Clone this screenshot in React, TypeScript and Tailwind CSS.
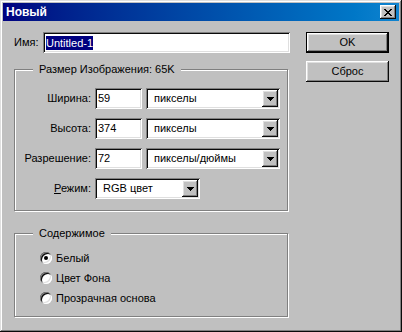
import type { ReactNode } from 'react'

const raised =
  'shadow-[inset_-1px_-1px_#0a0a0a,inset_1px_1px_#ffffff,inset_-2px_-2px_#808080,inset_2px_2px_#dfdfdf]'
const sunken =
  'shadow-[inset_1px_1px_#808080,inset_-1px_-1px_#ffffff,inset_2px_2px_#0a0a0a,inset_-2px_-2px_#dfdfdf]'

function CloseGlyph() {
  return (
    <svg width="8" height="7" viewBox="0 0 8 7" shapeRendering="crispEdges">
      <path
        fill="#000"
        d="M0 0h2v1H0zM6 0h2v1H6zM1 1h2v1H1zM5 1h2v1H5zM2 2h4v1H2zM3 3h2v1H3zM2 4h4v1H2zM1 5h2v1H1zM5 5h2v1H5zM0 6h2v1H0zM6 6h2v1H6z"
      />
    </svg>
  )
}

function ArrowGlyph() {
  return (
    <svg width="7" height="4" viewBox="0 0 7 4" shapeRendering="crispEdges">
      <path fill="#000" d="M0 0h7v1H0zM1 1h5v1H1zM2 2h3v1H2zM3 3h1v1H3z" />
    </svg>
  )
}

function TextBox({ value, width }: { value: string; width: string }) {
  return (
    <div className={`${width} h-[21px] bg-white ${sunken} flex items-center pl-[3px] leading-none`}>
      {value}
    </div>
  )
}

function Select({ value, width }: { value: string; width: string }) {
  return (
    <div className={`${width} h-[21px] bg-white ${sunken} flex items-center p-[2px]`}>
      <span className="flex-1 pl-[6px] leading-none">{value}</span>
      <div className={`w-[16px] h-[17px] bg-[#c0c0c0] ${raised} flex items-center justify-center`}>
        <ArrowGlyph />
      </div>
    </div>
  )
}

function Group({ label, className, children }: { label: string; className: string; children: ReactNode }) {
  return (
    <div
      className={`relative w-[274px] border border-[#808080] shadow-[1px_1px_0_#ffffff,inset_1px_1px_0_#ffffff] ${className}`}
    >
      <span className="absolute -top-[7px] left-[18px] px-[6px] bg-[#c0c0c0] leading-[13px]">{label}</span>
      {children}
    </div>
  )
}

function Row({ label, children }: { label: ReactNode; children: ReactNode }) {
  return (
    <div className="flex items-center h-[21px]">
      <div className="w-[76px] text-right leading-none">{label}</div>
      <div className="flex gap-[4px] ml-[4px]">{children}</div>
    </div>
  )
}

function Radio({ label, checked }: { label: string; checked?: boolean }) {
  return (
    <div className="flex items-center h-[20px] pl-[25px]">
      <div className={`w-[12px] h-[12px] rounded-full bg-white ${sunken} flex items-center justify-center`}>
        {checked && <div className="w-[4px] h-[4px] rounded-full bg-black" />}
      </div>
      <span className="ml-[4px] leading-none">{label}</span>
    </div>
  )
}

export default function App() {
  return (
    <div className="w-[402px] h-[332px] bg-[#c0c0c0] p-[3px] flex flex-col text-[11px] text-black font-['Liberation_Sans',Arial,sans-serif] shadow-[inset_-1px_-1px_#0a0a0a,inset_1px_1px_#dfdfdf,inset_-2px_-2px_#808080,inset_2px_2px_#ffffff]">
      <div className="h-[18px] flex items-center justify-between pl-[3px] pr-[3px] bg-linear-to-r from-[#000080] to-[#1084d0]">
        <span className="text-white font-bold text-[12px] leading-none">Новый</span>
        <div className={`w-[16px] h-[14px] bg-[#c0c0c0] ${raised} flex items-center justify-center`}>
          <CloseGlyph />
        </div>
      </div>

      <div className="flex pl-[11px] pr-[10px] pt-[11px]">
        <div className="w-[276px] flex flex-col">
          <div className="flex items-center h-[21px]">
            <span className="w-[29px] leading-none">Имя:</span>
            <div className={`w-[247px] h-[21px] bg-white ${sunken} flex items-center pl-[3px]`}>
              <span className="bg-[#000080] text-white leading-[14px] h-[14px]">Untitled-1</span>
            </div>
          </div>

          <Group label="Размер Изображения:  65K" className="mt-[16px] pt-[18px] pb-[11px]">
            <div className="flex flex-col gap-[9px]">
              <Row label="Ширина:">
                <TextBox value="59" width="w-[47px]" />
                <Select value="пикселы" width="w-[134px]" />
              </Row>
              <Row label="Высота:">
                <TextBox value="374" width="w-[47px]" />
                <Select value="пикселы" width="w-[134px]" />
              </Row>
              <Row label="Разрешение:">
                <TextBox value="72" width="w-[47px]" />
                <Select value="пикселы/дюймы" width="w-[134px]" />
              </Row>
              <Row
                label={
                  <>
                    <span className="underline">Р</span>ежим:
                  </>
                }
              >
                <Select value="RGB цвет" width="w-[105px]" />
              </Row>
            </div>
          </Group>

          <Group label="Содержимое" className="mt-[22px] pt-[14px] pb-[8px]">
            <Radio label="Белый" checked />
            <Radio label="Цвет Фона" />
            <Radio label="Прозрачная основа" />
          </Group>
        </div>

        <div className="ml-auto w-[83px] flex flex-col">
          <div className="h-[21px] border border-black">
            <div className={`h-full bg-[#c0c0c0] ${raised} flex items-center justify-center leading-none`}>OK</div>
          </div>
          <div className={`mt-[8px] h-[21px] bg-[#c0c0c0] ${raised} flex items-center justify-center leading-none`}>
            Сброс
          </div>
        </div>
      </div>
    </div>
  )
}
